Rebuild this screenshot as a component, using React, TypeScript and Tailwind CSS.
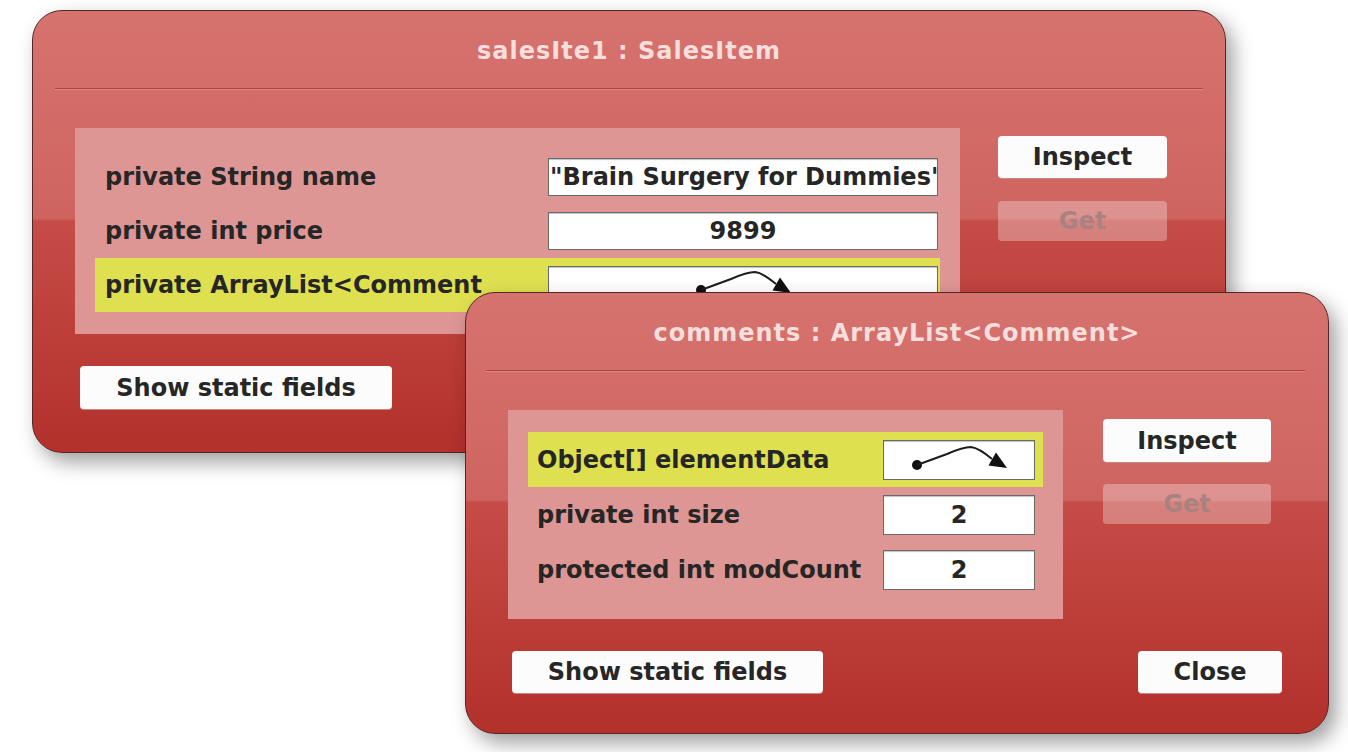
import React from 'react';

interface Field {
  label: string;
  value?: string;
  isRef?: boolean;
  alignLeft?: boolean;
  highlight?: boolean;
}

interface WindowProps {
  title: string;
  fields: Field[];
  className: string;
  panelWidth: string;
  boxWidth: string;
  boxHeight: string;
  rowHeight: string;
  boxMargin: string;
  labelPad: string;
  sepMargin: string;
  btnCol: string;
  inspectSize: string;
  getSize: string;
  btnGap: string;
  footer: React.ReactNode;
}

// object reference glyph: dot, curved line, arrow head
function RefArrow() {
  return (
    <svg width="96" height="40" viewBox="0 0 96 40" className="shrink-0">
      <circle cx="6" cy="25" r="5" fill="#111" />
      <path
        d="M6 25 L36 14 Q52 7 60 7 Q68 8 81 19"
        fill="none"
        stroke="#1c1c1c"
        strokeWidth="2"
      />
      <polygon points="96,28 77.5,25.5 85,12.5" fill="#111" />
    </svg>
  );
}

function Button({ text, size, faded }: { text: string; size: string; faded?: boolean }) {
  return (
    <div
      className={`${size} flex items-center justify-center rounded-[4px] text-[24px] font-bold ${
        faded
          ? 'bg-white/30 text-[#a88280]'
          : 'bg-[#fcfcfc] text-[#262626] shadow-[0_1px_0_#c98a7e]'
      }`}
    >
      {text}
    </div>
  );
}

function InspectorWindow({
  title,
  fields,
  className,
  panelWidth,
  boxWidth,
  boxHeight,
  rowHeight,
  boxMargin,
  labelPad,
  sepMargin,
  btnCol,
  inspectSize,
  getSize,
  btnGap,
  footer,
}: WindowProps) {
  return (
    <div
      className={`absolute ${className} flex flex-col overflow-hidden rounded-[30px] border border-[#552624] bg-[linear-gradient(180deg,#d6736f_0%,#cf645f_47%,#c64c47_47.6%,#b3302b_100%)] shadow-[7px_9px_20px_rgba(0,0,0,0.38)]`}
    >
      <div className="flex h-[77px] items-center justify-center pt-[2px] text-[24px] font-bold tracking-[1px] text-[#f6dedc]">
        {title}
      </div>
      <div className={`${sepMargin} h-[2px] border-b border-[#dc8782] bg-[#b0443f]`} />
      <div className="mt-[38px] flex pl-[42px]">
        <div className={`${panelWidth} flex flex-col bg-[#de9695] px-[20px] py-[22px]`}>
          {fields.map((f) => (
            <div
              key={f.label}
              className={`${rowHeight} flex items-center ${f.highlight ? 'bg-[#dfe04f]' : ''}`}
            >
              <div className={`flex-1 whitespace-nowrap ${labelPad} text-[24px] font-bold text-[#262626]`}>
                {f.label}
              </div>
              <div
                className={`${boxWidth} ${boxHeight} ${boxMargin} flex shrink-0 items-center overflow-hidden border border-[#6a6a6a] bg-white shadow-[inset_0_1px_1px_rgba(0,0,0,0.25)] ${
                  f.alignLeft ? 'justify-start pl-[1px]' : 'justify-center'
                }`}
              >
                {f.isRef ? (
                  <RefArrow />
                ) : (
                  <span className="whitespace-nowrap text-[24px] font-bold text-[#262626]">{f.value}</span>
                )}
              </div>
            </div>
          ))}
        </div>
        <div className={`flex flex-col ${btnCol} ${btnGap}`}>
          <Button text="Inspect" size={inspectSize} />
          <Button text="Get" size={getSize} faded />
        </div>
      </div>
      {footer}
    </div>
  );
}

export default function App() {
  return (
    <div className="relative h-[752px] w-[1348px] overflow-hidden bg-white font-['DejaVu_Sans','Liberation_Sans',sans-serif]">
      <InspectorWindow
        title="salesIte1 : SalesItem"
        className="left-[32px] top-[10px] h-[443px] w-[1194px]"
        fields={[
          { label: 'private String name', value: '"Brain Surgery for Dummies\'', alignLeft: true },
          { label: 'private int price', value: '9899' },
          { label: 'private ArrayList<Comment', isRef: true, highlight: true },
        ]}
        panelWidth="w-[885px]"
        boxWidth="w-[390px]"
        boxHeight="h-[38px]"
        rowHeight="h-[54px]"
        boxMargin="mr-[2px]"
        labelPad="pl-[10px]"
        sepMargin="mx-[22px]"
        btnCol="ml-[38px] pt-[8px]"
        inspectSize="h-[42px] w-[169px]"
        getSize="h-[40px] w-[169px]"
        btnGap="gap-[23px]"
        footer={
          <div className="mt-[32px] flex pl-[47px]">
            <Button text="Show static fields" size="h-[43px] w-[312px]" />
          </div>
        }
      />
      <InspectorWindow
        title="comments : ArrayList<Comment>"
        className="left-[465px] top-[292px] h-[442px] w-[864px]"
        fields={[
          { label: 'Object[] elementData', isRef: true, highlight: true },
          { label: 'private int size', value: '2' },
          { label: 'protected int modCount', value: '2' },
        ]}
        panelWidth="w-[555px]"
        boxWidth="w-[152px]"
        boxHeight="h-[40px]"
        rowHeight="h-[55px]"
        boxMargin="mr-[8px]"
        labelPad="pl-[9px]"
        sepMargin="ml-[20px] mr-[23px]"
        btnCol="ml-[40px] pt-[9px]"
        inspectSize="h-[43px] w-[168px]"
        getSize="h-[40px] w-[168px]"
        btnGap="gap-[22px]"
        footer={
          <div className="mt-[32px] flex justify-between px-[46px]">
            <Button text="Show static fields" size="h-[42px] w-[311px]" />
            <Button text="Close" size="h-[42px] w-[144px]" />
          </div>
        }
      />
    </div>
  );
}
